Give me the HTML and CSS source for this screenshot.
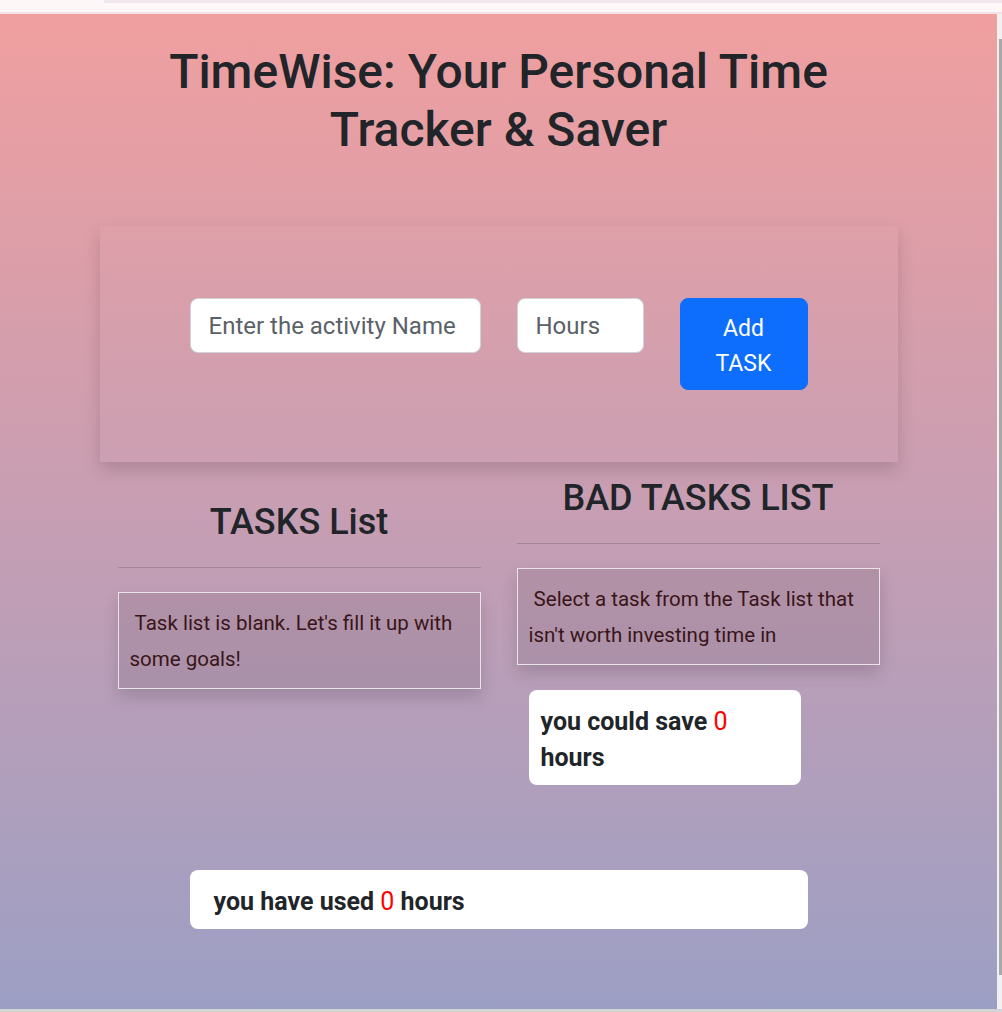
FILE: index.html
```html
<!DOCTYPE html>
<html lang="en">
<head>
<meta charset="utf-8">
<title>TimeWise</title>
<link rel="stylesheet" href="styles.css">
</head>
<body>
<div class="frame">
  <div class="topbar"><div class="topline"></div></div>
  <div class="viewport">
    <main class="page">
      <h1 class="title">TimeWise: Your Personal Time Tracker &amp; Saver</h1>

      <section class="card">
        <div class="form-row">
          <input class="field field-name" type="text" placeholder="Enter the activity Name">
          <input class="field field-hours" type="text" placeholder="Hours">
          <button class="btn-add" type="button">Add TASK</button>
        </div>
      </section>

      <section class="columns">
        <div class="col col-left">
          <h2 class="col-title">TASKS List</h2>
          <hr class="divider">
          <div class="list-box">&nbsp;Task list is blank. Let's fill it up with some goals!</div>
        </div>
        <div class="col col-right">
          <h2 class="col-title">BAD TASKS LIST</h2>
          <hr class="divider">
          <div class="list-box">&nbsp;Select a task from the Task list that isn't worth investing time in</div>
          <div class="save-box">you could save <span class="num">0</span> hours</div>
        </div>
      </section>

      <div class="used-box">you have used <span class="num">0</span> hours</div>
    </main>
    <div class="scrollbar"><div class="thumb"></div></div>
  </div>
  <div class="bottombar"></div>
</div>
</body>
</html>
```

FILE: styles.css
```css
* { box-sizing: border-box; }

html, body {
  margin: 0;
  padding: 0;
  height: 1012px;
  overflow: hidden;
}

body {
  font-family: Roboto, "Noto Sans", "Liberation Sans", sans-serif;
  color: #212529;
  background: #fdf7f8;
}

.frame {
  display: flex;
  flex-direction: column;
  height: 1012px;
}

.topbar {
  height: 14px;
  flex: none;
  background: #fdf7f8;
  border-bottom: 2px solid #f3e3e7;
}

.topline {
  margin-left: 104px;
  height: 3px;
  background: #f3e7ef;
}

.viewport {
  flex: 1;
  display: flex;
  min-height: 0;
}

.page {
  flex: 1;
  background: linear-gradient(180deg, #f09f9f 0%, #c79eb3 50%, #9c9fc4 100%);
  overflow: hidden;
}

.scrollbar {
  width: 5px;
  flex: none;
  background: #f1f1f1;
  padding: 25px 0 34px 2px;
}

.thumb {
  height: 100%;
  background: #a8a8a8;
}

.bottombar {
  height: 3px;
  flex: none;
  background: #d4d4d4;
}

/* Title */
.title {
  font-size: 48px;
  font-weight: 500;
  line-height: 58px;
  text-align: center;
  margin: 29px auto 0;
  width: 798px;
  color: #212529;
}

/* Input card */
.card {
  width: 798px;
  height: 236px;
  margin: 67px auto 0;
  background: rgba(255, 255, 255, 0.02);
  box-shadow: 0 8px 16px rgba(0, 0, 0, 0.15);
  display: flex;
  align-items: center;
  justify-content: center;
}

.form-row {
  display: flex;
  align-items: flex-start;
  gap: 36px;
}

.field {
  height: 55px;
  font-family: inherit;
  font-size: 24px;
  line-height: 33px;
  padding: 10px 18px;
  border: 1px solid #ced4da;
  border-radius: 8px;
  background: #fff;
  color: #212529;
  outline: none;
}

.field::placeholder {
  color: #5b6168;
}

.field-name { width: 291px; }
.field-hours { width: 127px; }

.btn-add {
  width: 128px;
  height: 92px;
  padding: 12px 20px;
  font-family: inherit;
  font-size: 23px;
  line-height: 35px;
  color: #fff;
  background: #0d6efd;
  border: 1px solid #0d6efd;
  border-radius: 8px;
}

/* Columns */
.columns {
  width: 798px;
  margin: 15px auto 0;
  padding: 0 18px;
  display: flex;
  gap: 36px;
  align-items: flex-start;
}

.col {
  flex: 1;
  min-width: 0;
}

.col-left {
  padding-top: 24px;
}

.col-title {
  margin: 0;
  font-size: 36px;
  font-weight: 500;
  line-height: 43px;
  text-align: center;
  color: #212529;
}

.divider {
  margin: 23px 0 0;
  border: 0;
  border-top: 1px solid rgba(33, 37, 41, 0.2);
}

.list-box {
  margin-top: 24px;
  height: 97px;
  padding: 12px 11px 10px;
  font-size: 20.5px;
  line-height: 36px;
  color: #3a1518;
  border: 1px solid rgba(255, 255, 255, 0.75);
  background: rgba(0, 0, 0, 0.08);
  box-shadow: 0 8px 16px rgba(0, 0, 0, 0.15);
}

.save-box {
  margin: 25px 0 0 12px;
  width: 272px;
  height: 95px;
  padding: 14px 12px 9px;
  background: #fff;
  border-radius: 8px;
  font-size: 25px;
  font-weight: 700;
  line-height: 36px;
  color: #212529;
}

.num {
  color: #ff0000;
  font-weight: 400;
}

.used-box {
  width: 618px;
  height: 59px;
  margin: 85px auto 0;
  padding: 15px 24px 11px;
  background: #fff;
  border-radius: 8px;
  font-size: 25px;
  font-weight: 700;
  line-height: 33px;
  color: #212529;
}
```
